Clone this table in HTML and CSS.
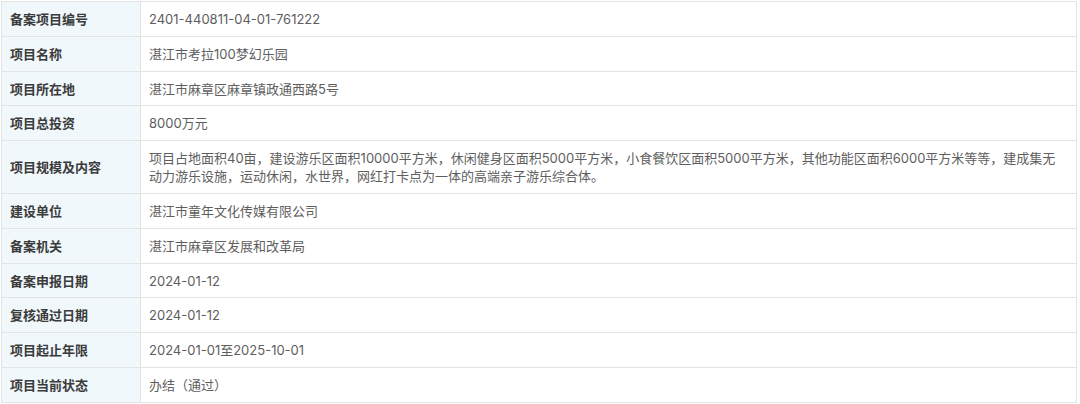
FILE: index.html
```html
<!DOCTYPE html>
<html lang="zh-CN">
<head>
    <meta charset="UTF-8">
    <meta name="viewport" content="width=device-width, initial-scale=1.0">
    <title>项目备案信息</title>
    <link rel="stylesheet" href="styles.css">
</head>
<body>
    <div class="container">
        <table class="info-table">
            <tbody>
                <tr>
                    <th>备案项目编号</th>
                    <td>2401-440811-04-01-761222</td>
                </tr>
                <tr>
                    <th>项目名称</th>
                    <td>湛江市考拉100梦幻乐园</td>
                </tr>
                <tr>
                    <th>项目所在地</th>
                    <td>湛江市麻章区麻章镇政通西路5号</td>
                </tr>
                <tr>
                    <th>项目总投资</th>
                    <td>8000万元</td>
                </tr>
                <tr>
                    <th>项目规模及内容</th>
                    <td>项目占地面积40亩，建设游乐区面积10000平方米，休闲健身区面积5000平方米，小食餐饮区面积5000平方米，其他功能区面积6000平方米等等，建成集无动力游乐设施，运动休闲，水世界，网红打卡点为一体的高端亲子游乐综合体。</td>
                </tr>
                <tr>
                    <th>建设单位</th>
                    <td>湛江市童年文化传媒有限公司</td>
                </tr>
                <tr>
                    <th>备案机关</th>
                    <td>湛江市麻章区发展和改革局</td>
                </tr>
                <tr>
                    <th>备案申报日期</th>
                    <td>2024-01-12</td>
                </tr>
                <tr>
                    <th>复核通过日期</th>
                    <td>2024-01-12</td>
                </tr>
                <tr>
                    <th>项目起止年限</th>
                    <td>2024-01-01至2025-10-01</td>
                </tr>
                <tr>
                    <th>项目当前状态</th>
                    <td>办结（通过）</td>
                </tr>
            </tbody>
        </table>
    </div>
</body>
</html>
```
FILE: styles.css
```css
body {
    margin: 0;
    background-color: #ffffff;
    font-family: Inter, "Noto Sans CJK SC", sans-serif;
    font-size: 13px;
}
.container {
    padding: 1px 3px 0 1px;
}
.info-table {
    width: 100%;
    border-collapse: collapse;
}
.info-table th,
.info-table td {
    border: 1px solid #e3e3e3;
    padding: 8px 8px 7.8px;
    line-height: 18px;
    text-align: left;
    vertical-align: middle;
}
.info-table th {
    width: 122px;
    background-color: #f0f8fc;
    color: #3b3b3b;
    font-weight: bold;
    white-space: nowrap;
}
.info-table td {
    padding-right: 14px;
    color: #5e5e5e;
}
```
